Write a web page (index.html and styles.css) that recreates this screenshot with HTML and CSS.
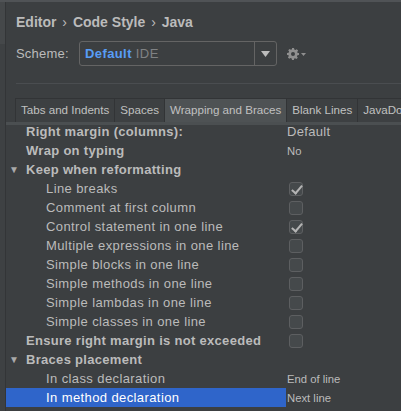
FILE: index.html
```html
<!DOCTYPE html>
<html>
<head>
<meta charset="utf-8">
<link rel="stylesheet" href="styles.css">
</head>
<body>
<div class="topbar"></div>
<div class="main">
  <aside class="side"><div class="side-top"></div></aside>
  <section class="panel">
    <h1 class="crumbs">Editor <span class="chev">›</span> Code Style <span class="chev">›</span> Java</h1>
    <div class="scheme-row">
      <span class="scheme-label">Scheme:</span>
      <div class="combo">
        <div class="combo-text"><b class="scheme-name">Default</b><span class="scheme-kind">IDE</span></div>
        <div class="combo-btn"><svg width="9" height="6" viewBox="0 0 9 6"><path d="M0 0H9L4.5 6Z" fill="#bcbcbc"/></svg></div>
      </div>
      <div class="gear">
        <svg width="12" height="12" viewBox="0 0 12 12">
          <path fill="#8f8f8f" fill-rule="evenodd" d="M5 0h2l.3 1.6 1.1.5 1.3-.9 1.4 1.4-.9 1.3.5 1.1L12 5v2l-1.6.3-.5 1.1.9 1.3-1.4 1.4-1.3-.9-1.1.5L7 12H5l-.3-1.6-1.1-.5-1.3.9-1.4-1.4.9-1.3-.5-1.1L0 7V5l1.6-.3.5-1.1-.9-1.3 1.4-1.4 1.3.9 1.1-.5ZM6 4a2 2 0 1 0 0 4 2 2 0 1 0 0-4Z"/>
        </svg>
        <svg class="gear-arrow" width="5" height="3" viewBox="0 0 5 3"><path d="M0 0H5L2.5 3Z" fill="#8f8f8f"/></svg>
      </div>
    </div>
    <div class="sep"></div>
    <div class="tabs">
      <div class="tab">Tabs and Indents</div>
      <div class="tab">Spaces</div>
      <div class="tab active">Wrapping and Braces</div>
      <div class="tab">Blank Lines</div>
      <div class="tab">JavaDoc</div>
    </div>
    <div class="band"></div>
    <div class="tree">
      <div class="rows">
        <div class="row"><span class="label top bold">Right margin (columns):</span><span class="value big">Default</span></div>
        <div class="row"><span class="label top bold">Wrap on typing</span><span class="value">No</span></div>
        <div class="row"><span class="label top bold"><span class="tri">▼</span>Keep when reformatting</span><span class="value"></span></div>
        <div class="row"><span class="label child">Line breaks</span><span class="value"><span class="cb checked"></span></span></div>
        <div class="row"><span class="label child">Comment at first column</span><span class="value"><span class="cb"></span></span></div>
        <div class="row"><span class="label child">Control statement in one line</span><span class="value"><span class="cb checked"></span></span></div>
        <div class="row"><span class="label child">Multiple expressions in one line</span><span class="value"><span class="cb"></span></span></div>
        <div class="row"><span class="label child">Simple blocks in one line</span><span class="value"><span class="cb"></span></span></div>
        <div class="row"><span class="label child">Simple methods in one line</span><span class="value"><span class="cb"></span></span></div>
        <div class="row"><span class="label child">Simple lambdas in one line</span><span class="value"><span class="cb"></span></span></div>
        <div class="row"><span class="label child">Simple classes in one line</span><span class="value"><span class="cb"></span></span></div>
        <div class="row"><span class="label top bold">Ensure right margin is not exceeded</span><span class="value"><span class="cb"></span></span></div>
        <div class="row"><span class="label top bold"><span class="tri">▼</span>Braces placement</span><span class="value"></span></div>
        <div class="row"><span class="label child">In class declaration</span><span class="value">End of line</span></div>
        <div class="row selected"><span class="label child">In method declaration</span><span class="value">Next line</span></div>
        <div class="row"><span class="label child">In lambda declaration</span><span class="value">End of line</span></div>
      </div>
    </div>
  </section>
</div>
</body>
</html>
```

FILE: styles.css
```css
html, body {
  margin: 0;
  padding: 0;
  height: 100%;
  overflow: hidden;
}
body {
  background: #3c3f41;
  color: #bbbbbb;
  font-family: "Liberation Sans", Arial, sans-serif;
  font-size: 13px;
}
.topbar {
  height: 2px;
  background: #505356;
}
.main {
  display: flex;
  height: 409px;
}
.side {
  width: 5px;
  flex: none;
  background: #3e4143;
  border-right: 1px solid #333537;
}
.side-top {
  height: 42px;
  background: #45484a;
}
.panel {
  flex: 1;
  min-width: 0;
  display: flex;
  flex-direction: column;
}
.crumbs {
  margin: 10px 0 0 10px;
  font-size: 14px;
  font-weight: bold;
  line-height: 20px;
  color: #bbbbbb;
  white-space: nowrap;
}
.chev {
  font-weight: normal;
  margin: 0 2px;
}
.scheme-row {
  display: flex;
  align-items: center;
  margin: 9px 0 0 10px;
  height: 25px;
}
.scheme-label {
  width: 63px;
  font-size: 13px;
  letter-spacing: 0.2px;
}
.combo {
  width: 196px;
  height: 23px;
  border: 1px solid #646464;
  border-radius: 3px;
  display: flex;
  align-items: stretch;
  background: #3c3f41;
}
.combo-text {
  flex: 1;
  padding-left: 5px;
  display: flex;
  align-items: center;
  gap: 4px;
  font-size: 13px;
  letter-spacing: 0.4px;
}
.scheme-name {
  color: #589df6;
}
.scheme-kind {
  color: #808284;
}
.combo-btn {
  width: 21px;
  border-left: 1px solid #646464;
  display: flex;
  align-items: center;
  justify-content: center;
}
.gear {
  margin-left: 10px;
  display: flex;
  align-items: center;
  gap: 2px;
}
.gear-arrow {
  margin-top: 2px;
}
.sep {
  margin: 17px 0 0 10px;
  height: 1px;
  background: #4a4d50;
}
.tabs {
  display: flex;
  margin: 14px 0 0 9px;
  height: 23px;
  border-top: 1px solid #323436;
  border-left: 1px solid #323436;
  white-space: nowrap;
}
.tab {
  flex: none;
  padding: 0 5px;
  line-height: 22px;
  font-size: 11.6px;
  color: #c0c0c0;
  border-right: 1px solid #323436;
  background: #3d4042;
}
.tab.active {
  background: #4e5254;
}
.band {
  height: 3px;
  background: #4b4f51;
}
.tree {
  flex: 1;
  overflow: hidden;
}
.rows {
  margin-top: -3px;
}
.row {
  display: flex;
  height: 19px;
  align-items: center;
  white-space: nowrap;
}
.label {
  width: 280px;
  flex: none;
  height: 19px;
  line-height: 19px;
  position: relative;
  box-sizing: border-box;
  letter-spacing: 0.4px;
}
.label.top {
  padding-left: 20px;
}
.label.child {
  padding-left: 40px;
}
.bold {
  font-weight: bold;
  letter-spacing: 0.3px;
}
.tri {
  position: absolute;
  left: 3px;
  top: 0;
  font-size: 10px;
  color: #a9a9a9;
  font-weight: normal;
}
.value {
  padding-left: 1px;
  font-size: 11.3px;
  display: flex;
  align-items: center;
}
.value.big {
  font-size: 13px;
  letter-spacing: 0.3px;
}
.row.selected .label {
  background: #2f65ca;
  color: #ffffff;
}
.cb {
  display: block;
  width: 12px;
  height: 12px;
  margin-left: 2px;
  border: 1px solid #5d5f61;
  border-radius: 3px;
  background: #45494b;
  position: relative;
}
.cb.checked::after {
  content: "";
  position: absolute;
  left: 4px;
  top: 0px;
  width: 4px;
  height: 9px;
  border-right: 2px solid #b4b4b4;
  border-bottom: 2px solid #b4b4b4;
  transform: rotate(40deg);
}
```
